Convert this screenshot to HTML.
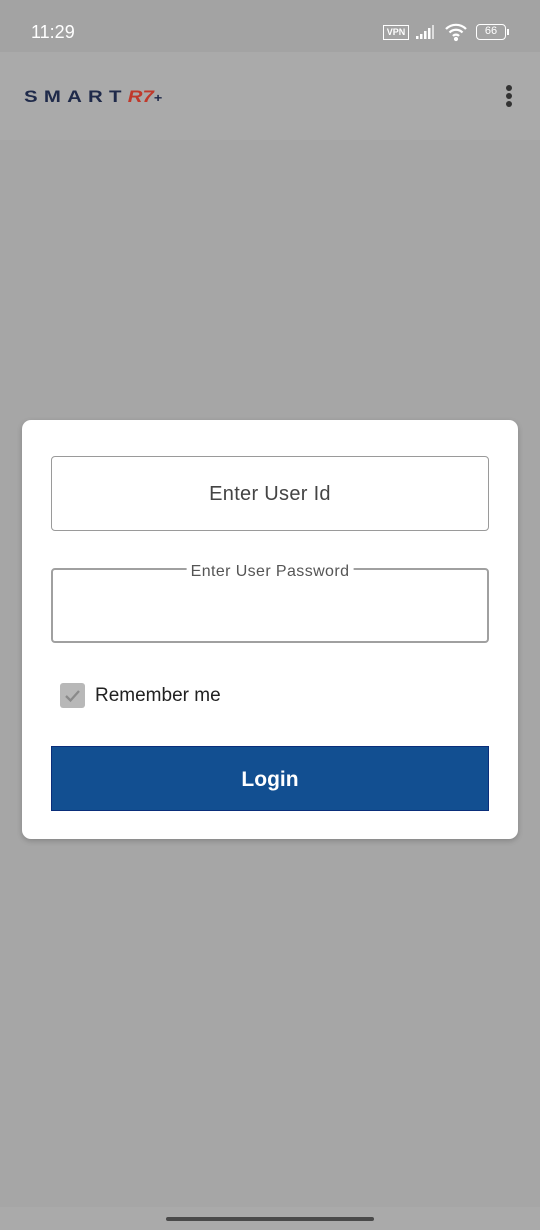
<!DOCTYPE html>
<html><head><style>
*{margin:0;padding:0;box-sizing:border-box}
body{width:540px;height:1230px;background:#a6a6a6;font-family:"Liberation Sans",sans-serif;position:relative;overflow:hidden}
.sb{position:absolute;left:0;top:0;width:540px;height:52px;background:#a3a3a3;color:#fff}
.hd{position:absolute;left:0;top:52px;width:540px;height:88px;background:#aaaaaa}
.card{position:absolute;left:22px;top:420px;width:496px;height:419px;background:#fff;border-radius:9px;box-shadow:0 2px 6px rgba(0,0,0,.2)}
.f1{position:absolute;left:29px;top:36px;width:438px;height:75px;border:1px solid #9a9a9a;border-radius:4px;text-align:center;line-height:75px;font-size:20px;color:#444;letter-spacing:.3px}
.f2{position:absolute;left:29px;top:148px;width:438px;height:75px;border:2px solid #a0a0a0;border-radius:4px}
.f2 span{position:absolute;top:-6px;left:50%;transform:translateX(-50%);background:#fff;padding:0 4px;font-size:16px;line-height:16px;color:#555;letter-spacing:.4px;white-space:nowrap}
.cb{position:absolute;left:38px;top:263px;width:25px;height:25px;background:#b8b8b8;border-radius:3px}
.rm{position:absolute;left:73px;top:265px;font-size:19px;color:#222}
.btn{position:absolute;left:29px;top:326px;width:438px;height:65px;background:#124f91;border:1px solid #0a2e7a;color:#fff;font-weight:bold;font-size:21px;text-align:center;line-height:66px}
.nav{position:absolute;left:0;top:1207px;width:540px;height:23px;background:#aaaaaa}
.nav div{position:absolute;left:166px;top:10px;width:208px;height:4px;border-radius:2px;background:#4a4a4a}
</style></head><body>
<div class="sb">
<div style="position:absolute;left:31px;top:22px;font-size:18px">11:29</div>
<div style="position:absolute;left:383px;top:25px;width:26px;height:15px;border:1.5px solid #fff;font-size:9px;font-weight:bold;text-align:center;line-height:12px">VPN</div>
<svg style="position:absolute;left:415px;top:24px" width="24" height="16"><rect x="1" y="12" width="2.5" height="3" fill="#fff"/><rect x="5" y="10" width="2.5" height="5" fill="#fff"/><rect x="9" y="7" width="2.5" height="8" fill="#fff"/><rect x="13" y="4" width="2.5" height="11" fill="#fff"/><rect x="17" y="1" width="2" height="14" fill="#ddd"/></svg>
<svg style="position:absolute;left:444px;top:22px" width="24" height="20" fill="none" stroke="#fff" stroke-width="2.2"><path d="M2 7a14 14 0 0 1 20 0"/><path d="M5.5 10.5a9 9 0 0 1 13 0"/><path d="M9 14a4 4 0 0 1 6 0"/><circle cx="12" cy="17" r="1" fill="#fff"/></svg>
<div style="position:absolute;left:476px;top:24px;width:30px;height:16px;border:1.5px solid #fff;border-radius:4px;font-size:11px;text-align:center;line-height:13px">66</div>
<div style="position:absolute;left:507px;top:29px;width:2px;height:6px;background:#fff"></div>
</div>
<div class="hd">
<div style="position:absolute;left:24px;top:35px;font-size:17px;font-weight:bold;letter-spacing:5.2px;color:#1f2a4a;transform:scaleX(1.2);transform-origin:left">SMART<span style="color:#c0392b;font-style:italic;letter-spacing:0">R7</span><span style="font-size:12px;letter-spacing:0">+</span></div>
<div style="position:absolute;left:506px;top:33px;width:6px;height:6px;border-radius:3px;background:#333;box-shadow:0 8px 0 #333,0 16px 0 #333"></div>
</div>
<div class="card">
<div class="f1">Enter User Id</div>
<div class="f2"><span>Enter User Password</span></div>
<div class="cb"><svg width="25" height="25"><path d="M6 13l4.5 4.5L19 8" fill="none" stroke="#8a8a8a" stroke-width="2.3"/></svg></div>
<div class="rm">Remember me</div>
<div class="btn">Login</div>
</div>
<div class="nav"><div></div></div>
</body></html>
